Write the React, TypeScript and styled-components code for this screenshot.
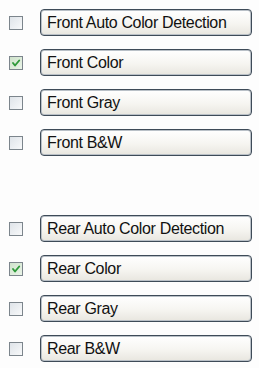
import React from "react";
import styled, { createGlobalStyle } from "styled-components";

const Global = createGlobalStyle`
  html, body { margin: 0; padding: 0; background: #fdfdfd; }
  body { font-family: "Liberation Sans", Arial, sans-serif; }
`;

const Page = styled.div`
  display: flex;
  flex-direction: column;
  gap: 59px;
  padding: 9px 7px 0 9px;
  width: 259px;
  box-sizing: border-box;
`;

const Group = styled.div`
  display: flex;
  flex-direction: column;
  gap: 13px;
`;

const Row = styled.div`
  display: flex;
  align-items: center;
  gap: 17px;
  height: 27px;
`;

const Box = styled.div<{ $checked?: boolean }>`
  width: 12px;
  height: 12px;
  flex: none;
  border: 1px solid #7c858c;
  background: ${(p) =>
    p.$checked
      ? "linear-gradient(135deg, #cfe3cb 0%, #eaf4e8 100%)"
      : "linear-gradient(135deg, #dfe4e9 0%, #f8f9fa 100%)"};
  display: flex;
  align-items: center;
  justify-content: center;
`;

const Button = styled.div`
  flex: 1;
  height: 100%;
  box-sizing: border-box;
  border: 1px solid #3e4b58;
  border-radius: 4px;
  box-shadow: inset 0 0 0 1px #b9c0c7;
  background: linear-gradient(180deg, #ffffff 0%, #f6f5f1 55%, #e8e6df 100%);
  display: flex;
  align-items: center;
  padding-left: 6px;
  font-size: 16px;
  color: #111;
  letter-spacing: -0.35px;
  white-space: nowrap;
  overflow: hidden;
`;

const Check = () => (
  <svg width="10" height="10" viewBox="0 0 10 10">
    <path d="M2 5 L4 7.5 L8.2 2.5" fill="none" stroke="#2f9a3a" strokeWidth="1.9" strokeLinecap="round" strokeLinejoin="round" />
  </svg>
);

type Item = { label: string; checked?: boolean };

const front: Item[] = [
  { label: "Front Auto Color Detection" },
  { label: "Front Color", checked: true },
  { label: "Front Gray" },
  { label: "Front B&W" },
];

const rear: Item[] = [
  { label: "Rear Auto Color Detection" },
  { label: "Rear Color", checked: true },
  { label: "Rear Gray" },
  { label: "Rear B&W" },
];

const OptionGroup = ({ items }: { items: Item[] }) => (
  <Group>
    {items.map((it) => (
      <Row key={it.label}>
        <Box $checked={it.checked}>{it.checked && <Check />}</Box>
        <Button>{it.label}</Button>
      </Row>
    ))}
  </Group>
);

export default function App() {
  return (
    <>
      <Global />
      <Page>
        <OptionGroup items={front} />
        <OptionGroup items={rear} />
      </Page>
    </>
  );
}
